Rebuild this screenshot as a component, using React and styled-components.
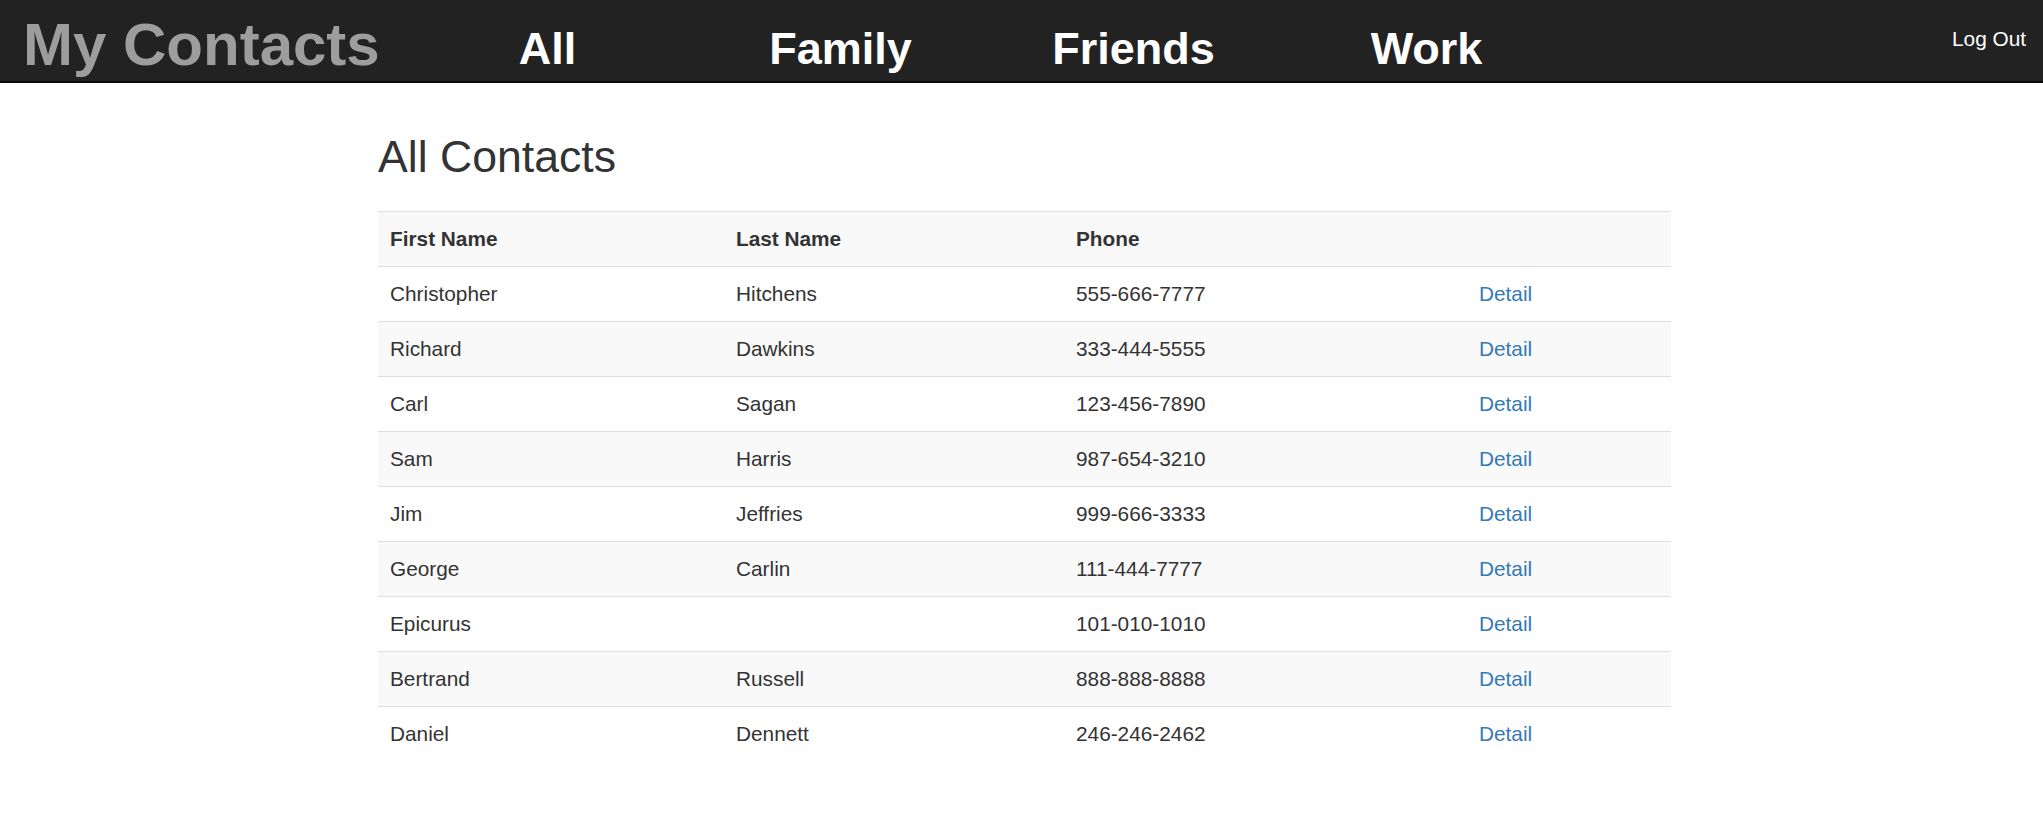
import React from 'react'
import styled, { createGlobalStyle } from 'styled-components'

const GlobalStyle = createGlobalStyle`
body {
  margin: 0;
  background: #fff;
  font-family: "Liberation Sans", Arial, sans-serif;
  color: #333;
}
`

const Navbar = styled.nav`
display: flex;
align-items: flex-start;
height: 81px;
background-color: #222;
border-bottom: 2px solid #080808;
padding-left: 23px;
padding-right: 17px;
`

const Brand = styled.h1`
width: 378px;
margin: 15px 0 0;
font-size: 60px;
line-height: 60px;
font-weight: bold;
color: #9d9d9d;
white-space: nowrap;
`

const NavList = styled.ul`
display: flex;
list-style: none;
margin: 0;
padding: 0;
`

const NavItem = styled.li`
width: 293px;
margin-top: 26px;
text-align: center;
font-size: 45px;
line-height: 45px;
font-weight: bold;
color: #fff;
cursor: pointer;
`

const LogOut = styled.a`
margin-left: auto;
margin-top: 29px;
font-size: 20.8px;
line-height: 20.8px;
color: #fff;
cursor: pointer;
`

const Main = styled.main`
width: 1293px;
margin: 0 0 0 378px;
`

const Title = styled.h1`
margin: 50px 0 30px;
font-size: 44.6px;
line-height: 48px;
font-weight: normal;
color: #333;
`

const Table = styled.table`
width: 100%;
border-collapse: collapse;
font-size: 20.8px;
table-layout: fixed;
`

const Row = styled.tr`
background-color: ${(props) => (props.$striped ? '#f9f9f9' : '#fff')};
`

const Head = styled.th`
width: ${(props) => props.$w}px;
padding: 0 12px;
line-height: 54px;
text-align: left;
font-weight: bold;
border-top: 1px solid #ddd;
`

const Cell = styled.td`
padding: 0 12px;
line-height: 54px;
border-top: 1px solid #ddd;
white-space: nowrap;
`

const DetailLink = styled.a`
color: #337ab7;
text-decoration: none;
cursor: pointer;
`

const contacts = [
  ['Christopher', 'Hitchens', '555-666-7777'],
  ['Richard', 'Dawkins', '333-444-5555'],
  ['Carl', 'Sagan', '123-456-7890'],
  ['Sam', 'Harris', '987-654-3210'],
  ['Jim', 'Jeffries', '999-666-3333'],
  ['George', 'Carlin', '111-444-7777'],
  ['Epicurus', '', '101-010-1010'],
  ['Bertrand', 'Russell', '888-888-8888'],
  ['Daniel', 'Dennett', '246-246-2462'],
]

const App = () => {
  return (
    <>
      <GlobalStyle />
      <Navbar>
        <Brand>My Contacts</Brand>
        <NavList>
          <NavItem>All</NavItem>
          <NavItem>Family</NavItem>
          <NavItem>Friends</NavItem>
          <NavItem>Work</NavItem>
        </NavList>
        <LogOut>Log Out</LogOut>
      </Navbar>
      <Main>
        <Title>All Contacts</Title>
        <Table>
          <thead>
            <Row $striped>
              <Head $w={322}>First Name</Head>
              <Head $w={316}>Last Name</Head>
              <Head $w={379}>Phone</Head>
              <Head $w={180}></Head>
            </Row>
          </thead>
          <tbody>
            {contacts.map((c, i) => (
              <Row key={c[0]} $striped={i % 2 === 1}>
                <Cell>{c[0]}</Cell>
                <Cell>{c[1]}</Cell>
                <Cell>{c[2]}</Cell>
                <Cell><DetailLink>Detail</DetailLink></Cell>
              </Row>
            ))}
          </tbody>
        </Table>
      </Main>
    </>
  )
}

export default App
